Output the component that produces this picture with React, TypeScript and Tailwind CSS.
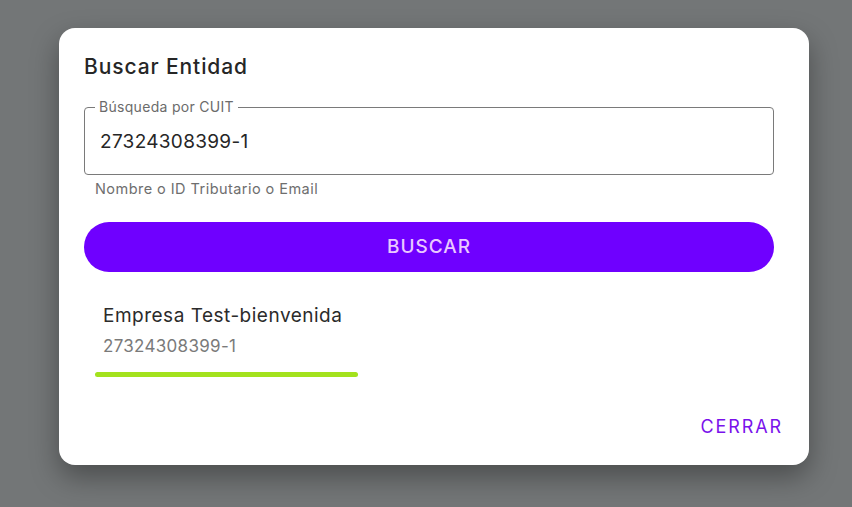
import React, { useState } from 'react';

export default function App() {
  const [cuit, setCuit] = useState('27324308399-1');

  return (
    <div
      className="w-[852px] h-[507px] bg-[#737677] overflow-hidden pt-[28px] pl-[59px]"
      style={{ fontFamily: 'Inter, Roboto, sans-serif' }}
    >
      <div className="w-[750px] h-[437px] bg-white rounded-[16px] shadow-[0_12px_28px_rgba(0,0,0,0.35)] flex flex-col pl-[25px] pr-[35px]">
        <h2 className="mt-[25px] text-[21px] leading-[28px] font-medium text-[#262626] tracking-[0.9px]">
          Buscar Entidad
        </h2>

        <div className="mt-[26px] relative h-[68px] border border-[#7a7a7a] rounded-[4px] flex items-center">
          <span className="absolute left-[10px] -top-[9px] px-[4px] bg-white text-[14px] leading-[16px] text-[#6b6b6b] tracking-[0.3px]">
            Búsqueda por CUIT
          </span>
          <input
            value={cuit}
            onChange={(e) => setCuit(e.target.value)}
            className="w-full pl-[15px] pt-[2px] text-[19px] text-[#262626] tracking-[0.3px] outline-none bg-transparent"
          />
        </div>
        <p className="mt-[4px] ml-[11px] text-[14.5px] leading-[20px] text-[#6e6e6e] tracking-[0.45px]">
          Nombre o ID Tributario o Email
        </p>

        <button className="mt-[23px] h-[50px] w-full rounded-full bg-[#6f00ff] text-[#e9c8ff] text-[19px] font-medium tracking-[1px]">
          BUSCAR
        </button>

        <div className="mt-[32px] ml-[11px] w-[263px]">
          <div className="pl-[8px] text-[19px] leading-[24px] text-[#2b2b2b] tracking-[0.5px]">Empresa Test-bienvenida</div>
          <div className="pl-[8px] mt-[8px] text-[17px] leading-[20px] text-[#7a7a7a] tracking-[0.3px]">27324308399-1</div>
          <div className="mt-[16px] h-[5px] rounded-full bg-[#a3e21d]" />
        </div>

        <div className="mt-[38px] flex justify-end -mr-[9px]">
          <button className="text-[18px] leading-[24px] text-[#7a12eb] tracking-[1.9px]">CERRAR</button>
        </div>
      </div>
    </div>
  );
}
